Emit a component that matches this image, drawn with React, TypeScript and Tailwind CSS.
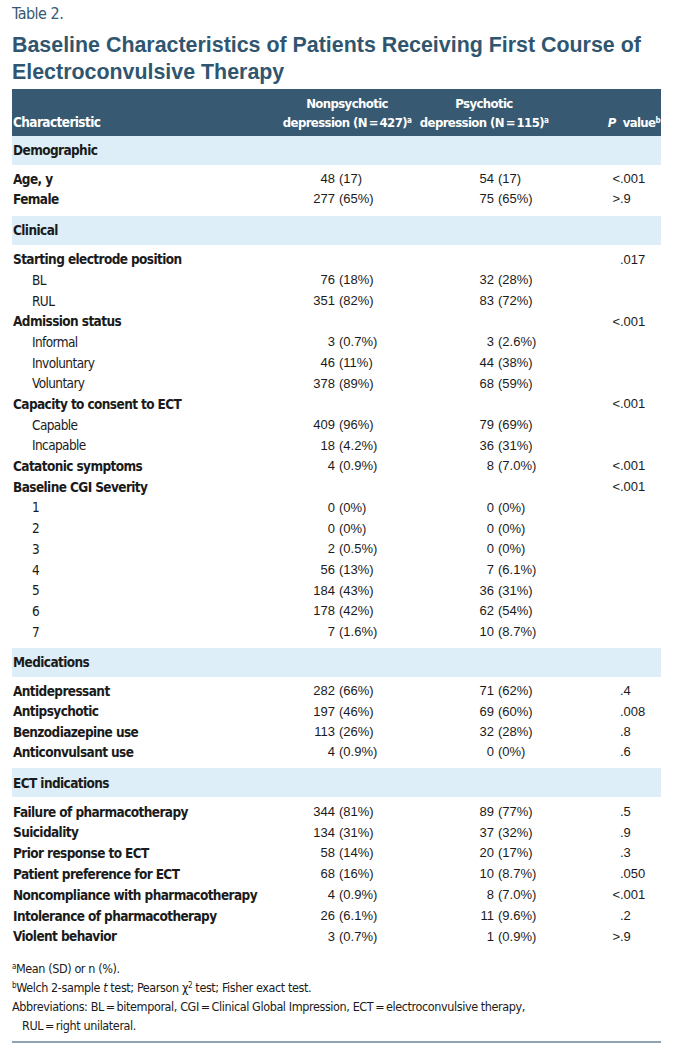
import React from 'react';

type Row = {
  label: string;
  sub?: boolean;
  v1?: string;
  v2?: string;
  p?: string;
};

type Section = {
  title: string;
  rowH: string;
  after: string;
  rows: Row[];
};

const sections: Section[] = [
  {
    title: 'Demographic',
    rowH: 'h-[20px]',
    after: 'mb-[7px]',
    rows: [
      { label: 'Age, y', v1: '48 (17)', v2: '54 (17)', p: '<.001' },
      { label: 'Female', v1: '277 (65%)', v2: '75 (65%)', p: '>.9' },
    ],
  },
  {
    title: 'Clinical',
    rowH: 'h-[20.7px]',
    after: 'mb-[6px]',
    rows: [
      { label: 'Starting electrode position', p: '.017' },
      { label: 'BL', sub: true, v1: '76 (18%)', v2: '32 (28%)' },
      { label: 'RUL', sub: true, v1: '351 (82%)', v2: '83 (72%)' },
      { label: 'Admission status', p: '<.001' },
      { label: 'Informal', sub: true, v1: '3 (0.7%)', v2: '3 (2.6%)' },
      { label: 'Involuntary', sub: true, v1: '46 (11%)', v2: '44 (38%)' },
      { label: 'Voluntary', sub: true, v1: '378 (89%)', v2: '68 (59%)' },
      { label: 'Capacity to consent to ECT', p: '<.001' },
      { label: 'Capable', sub: true, v1: '409 (96%)', v2: '79 (69%)' },
      { label: 'Incapable', sub: true, v1: '18 (4.2%)', v2: '36 (31%)' },
      { label: 'Catatonic symptoms', v1: '4 (0.9%)', v2: '8 (7.0%)', p: '<.001' },
      { label: 'Baseline CGI Severity', p: '<.001' },
      { label: '1', sub: true, v1: '0 (0%)', v2: '0 (0%)' },
      { label: '2', sub: true, v1: '0 (0%)', v2: '0 (0%)' },
      { label: '3', sub: true, v1: '2 (0.5%)', v2: '0 (0%)' },
      { label: '4', sub: true, v1: '56 (13%)', v2: '7 (6.1%)' },
      { label: '5', sub: true, v1: '184 (43%)', v2: '36 (31%)' },
      { label: '6', sub: true, v1: '178 (42%)', v2: '62 (54%)' },
      { label: '7', sub: true, v1: '7 (1.6%)', v2: '10 (8.7%)' },
    ],
  },
  {
    title: 'Medications',
    rowH: 'h-[20.3px]',
    after: 'mb-[6px]',
    rows: [
      { label: 'Antidepressant', v1: '282 (66%)', v2: '71 (62%)', p: '.4' },
      { label: 'Antipsychotic', v1: '197 (46%)', v2: '69 (60%)', p: '.008' },
      { label: 'Benzodiazepine use', v1: '113 (26%)', v2: '32 (28%)', p: '.8' },
      { label: 'Anticonvulsant use', v1: '4 (0.9%)', v2: '0 (0%)', p: '.6' },
    ],
  },
  {
    title: 'ECT indications',
    rowH: 'h-[20.8px]',
    after: 'mb-0',
    rows: [
      { label: 'Failure of pharmacotherapy', v1: '344 (81%)', v2: '89 (77%)', p: '.5' },
      { label: 'Suicidality', v1: '134 (31%)', v2: '37 (32%)', p: '.9' },
      { label: 'Prior response to ECT', v1: '58 (14%)', v2: '20 (17%)', p: '.3' },
      { label: 'Patient preference for ECT', v1: '68 (16%)', v2: '10 (8.7%)', p: '.050' },
      { label: 'Noncompliance with pharmacotherapy', v1: '4 (0.9%)', v2: '8 (7.0%)', p: '<.001' },
      { label: 'Intolerance of pharmacotherapy', v1: '26 (6.1%)', v2: '11 (9.6%)', p: '.2' },
      { label: 'Violent behavior', v1: '3 (0.7%)', v2: '1 (0.9%)', p: '>.9' },
    ],
  },
];

const narrow = "font-['DejaVu_Sans_Condensed','DejaVu_Sans',sans-serif] font-stretch-condensed";
const plain = "font-['Liberation_Sans',Arial,sans-serif]";
const label = 'text-[13.5px] tracking-[-0.6px] whitespace-nowrap';

// number right-aligned, parenthesis part left-aligned, so the "(" lines up
const Value = ({ v, numW, parW }: { v?: string; numW: string; parW: string }) => {
  const [num, par] = v ? [v.slice(0, v.indexOf(' ')), v.slice(v.indexOf(' ') + 1)] : ['', ''];
  return (
    <>
      <span className={`${numW} text-right`}>{num}</span>
      <span className={`${parW} pl-[4px]`}>{par}</span>
    </>
  );
};

const PValue = ({ p }: { p?: string }) => {
  const i = p ? p.indexOf('.') : 0;
  return (
    <>
      <span className="w-[8px] text-right">{p ? p.slice(0, i) : ''}</span>
      <span>{p ? p.slice(i) : ''}</span>
    </>
  );
};

export default function App() {
  return (
    <div className="w-[673px] min-h-[1051px] bg-white text-[#1b1b1b]">
      <div className="px-[12px] pt-[3px]">
        <div className={`${narrow} text-[16px] leading-[22px] tracking-[-0.5px] text-[#365870]`}>Table 2.</div>
        <h1 className={`${plain} mt-[7px] text-[21.4px] leading-[27px] font-bold text-[#30566f]`}>
          Baseline Characteristics of Patients Receiving First Course of
          <br />
          Electroconvulsive Therapy
        </h1>

        {/* header */}
        <div className={`${narrow} mt-[3px] flex h-[47px] items-end bg-[#375a72] pb-[4px] text-[13px] leading-[19px] tracking-[-0.6px] whitespace-nowrap font-bold text-white`}>
          <div className="w-[265px] pl-[1px] text-[13.5px]">Characteristic</div>
          <div className="flex w-[140px] flex-col items-center">
            <span>Nonpsychotic</span>
            <span>
              depression (N{'\u2009'}={'\u2009'}427)<sup className="text-[8px]">a</sup>
            </span>
          </div>
          <div className="flex w-[134px] flex-col items-center">
            <span>Psychotic</span>
            <span>
              depression (N{'\u2009'}={'\u2009'}115)<sup className="text-[8px]">a</sup>
            </span>
          </div>
          <div className="flex-1 pr-[1px] text-right">
            <i>P</i>&nbsp; value<sup className="text-[8px]">b</sup>
          </div>
        </div>

        {sections.map((s) => (
          <div key={s.title} className={s.after}>
            <div className={`${narrow} ${label} flex h-[29px] items-center bg-[#deeef8] pl-[1px] font-bold`}>
              {s.title}
            </div>
            <div className="mt-[4px]">
              {s.rows.map((r) => (
                <div key={r.label} className={`flex items-center ${s.rowH}`}>
                  <div
                    className={`${narrow} ${label} w-[276px] ${
                      r.sub ? 'pl-[20px] font-normal' : 'pl-[1px] font-bold'
                    }`}
                  >
                    {r.label}
                  </div>
                  <div className={`${plain} flex text-[13px]`}>
                    <Value v={r.v1} numW="w-[47px]" parW="w-[112px]" />
                    <Value v={r.v2} numW="w-[47px]" parW="w-[118px]" />
                    <PValue p={r.p} />
                  </div>
                </div>
              ))}
            </div>
          </div>
        ))}

        {/* footnotes */}
        <div className={`${narrow} mt-[12px] text-[12.5px] leading-[19px] tracking-[-0.4px]`}>
          <div>
            <sup className="text-[8px]">a</sup>Mean (SD) or n (%).
          </div>
          <div>
            <sup className="text-[8px]">b</sup>Welch 2-sample <i>t</i> test; Pearson χ<sup className="text-[8px]">2</sup> test; Fisher exact test.
          </div>
          <div>
            Abbreviations: BL{'\u2009'}={'\u2009'}bitemporal, CGI{'\u2009'}={'\u2009'}Clinical Global Impression, ECT{'\u2009'}={'\u2009'}electroconvulsive therapy,
          </div>
          <div className="pl-[10px]">RUL{'\u2009'}={'\u2009'}right unilateral.</div>
        </div>
        <div className="mt-[6px] h-[2px] bg-[#8fa3b3]" />
      </div>
    </div>
  );
}
